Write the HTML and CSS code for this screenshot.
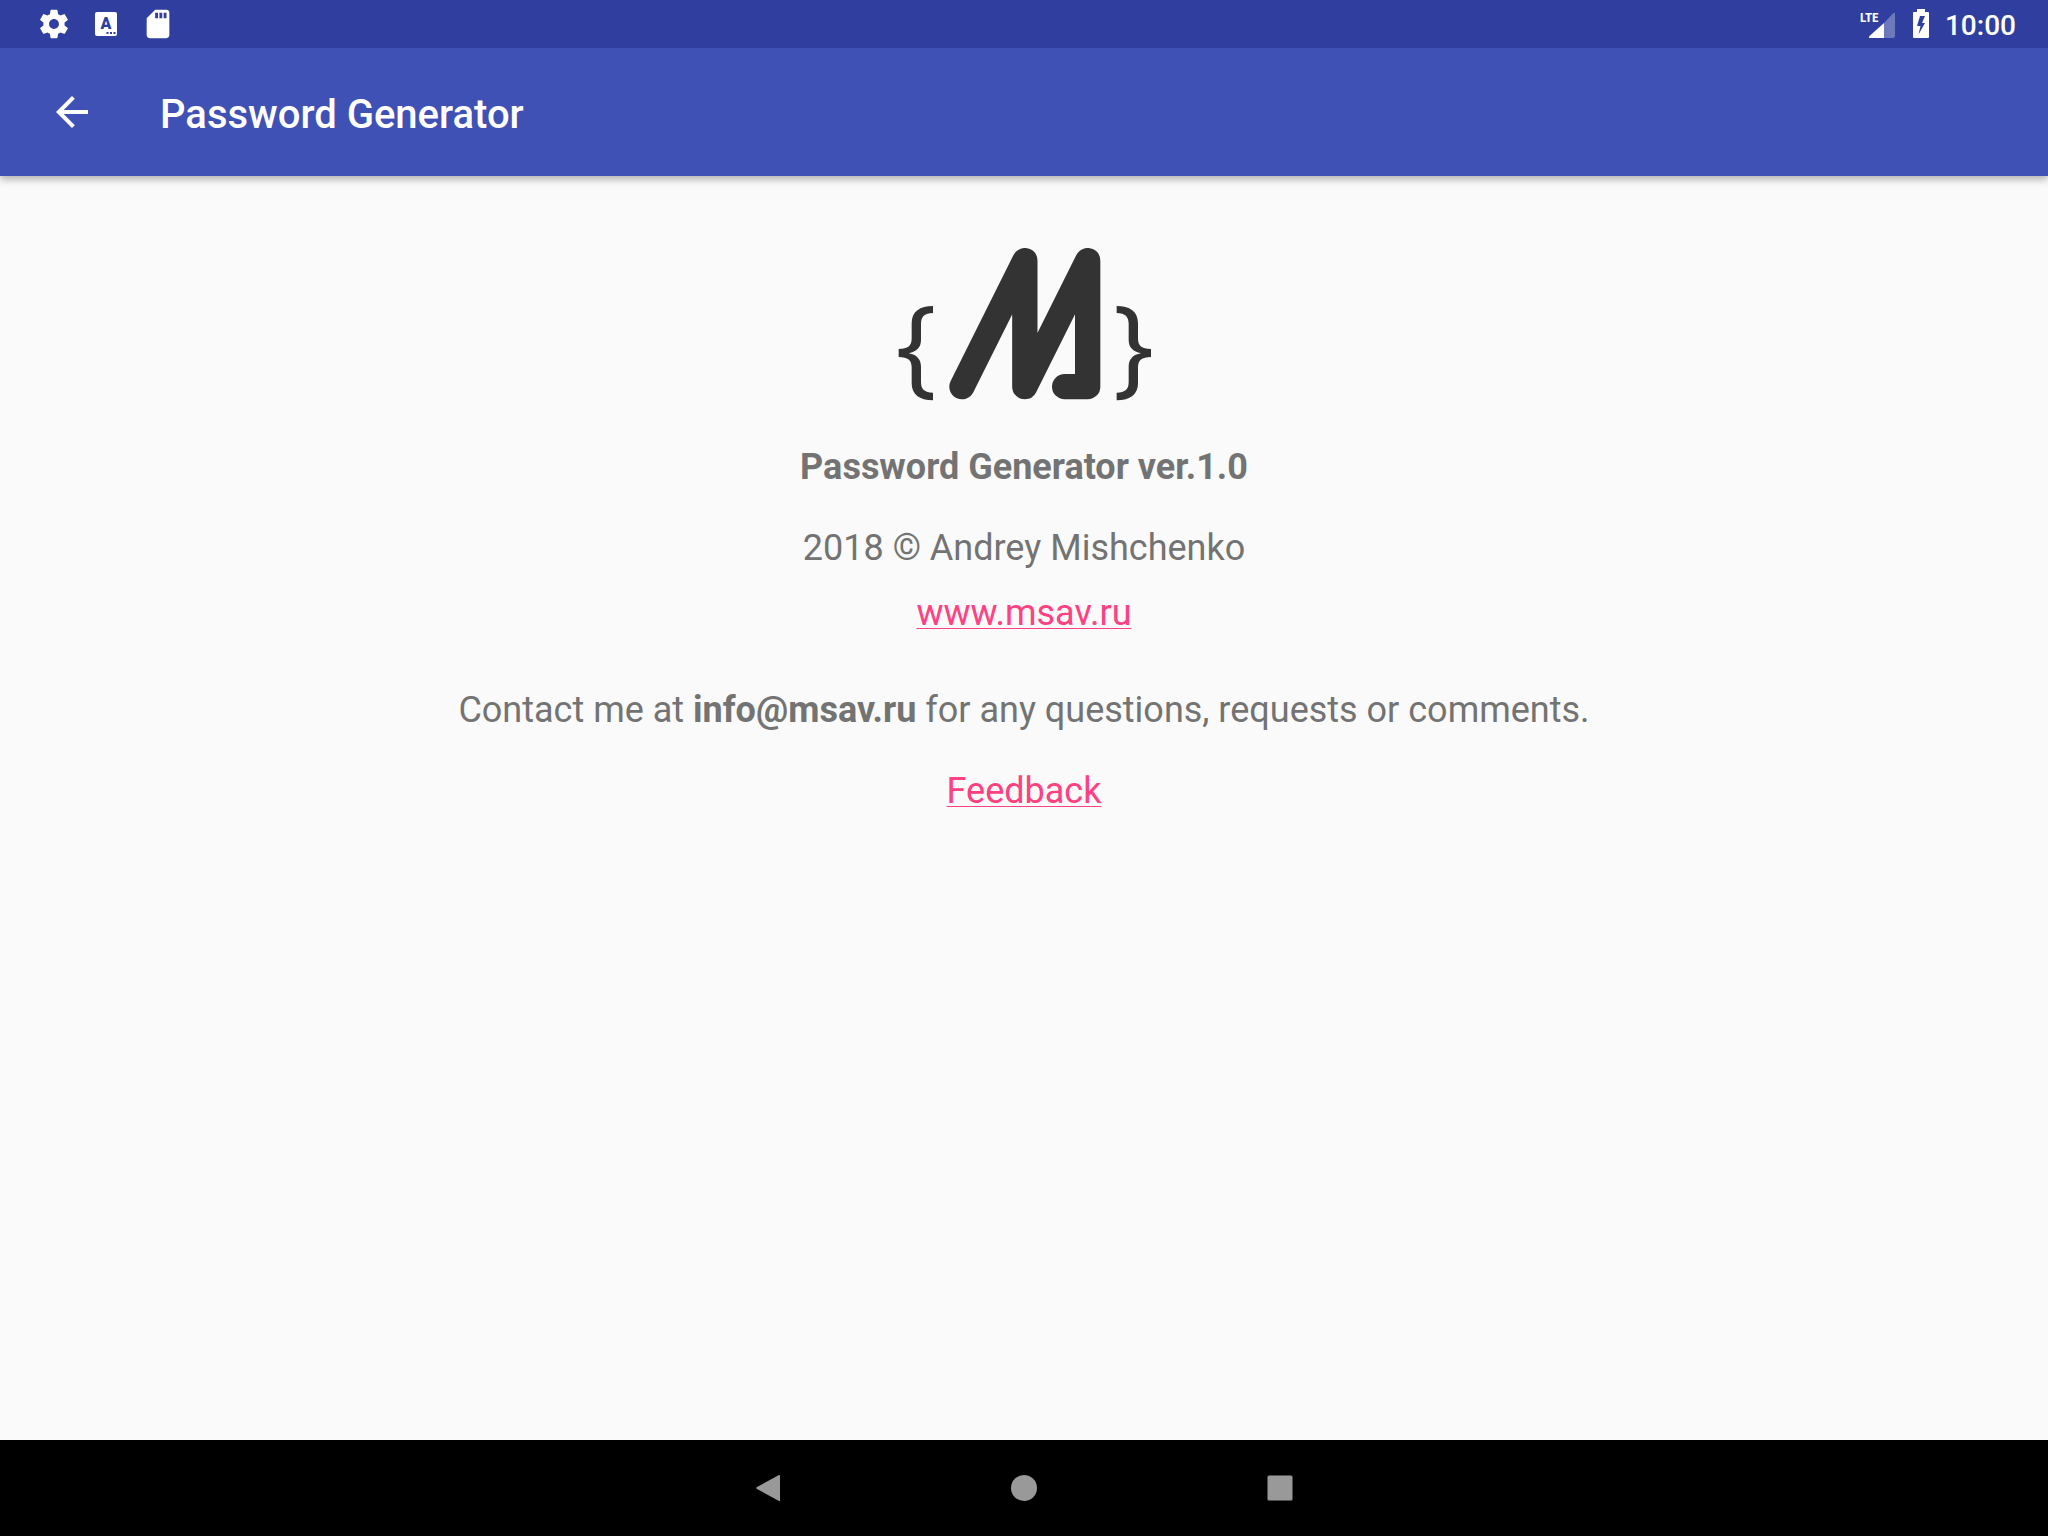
FILE: index.html
```html
<!DOCTYPE html>
<html lang="en">
<head>
<meta charset="utf-8">
<meta name="viewport" content="width=device-width, initial-scale=1">
<title>Password Generator</title>
<link rel="stylesheet" href="styles.css">
</head>
<body>
<div class="status-bar">
  <div class="status-left">
    <svg class="status-icon" viewBox="0 0 24 24" aria-hidden="true"><path d="M19.43 12.98c.04-.32.07-.64.07-.98s-.03-.66-.07-.98l2.11-1.65c.19-.15.24-.42.12-.64l-2-3.46c-.12-.22-.39-.3-.61-.22l-2.49 1c-.52-.4-1.08-.73-1.69-.98l-.38-2.65C14.46 2.18 14.25 2 14 2h-4c-.25 0-.46.18-.49.42l-.38 2.65c-.61.25-1.17.59-1.69.98l-2.49-1c-.23-.09-.49 0-.61.22l-2 3.46c-.13.22-.07.49.12.64l2.11 1.65c-.04.32-.07.65-.07.98s.03.66.07.98l-2.11 1.65c-.19.15-.24.42-.12.64l2 3.46c.12.22.39.3.61.22l2.49-1c.52.4 1.08.73 1.69.98l.38 2.65c.03.24.24.42.49.42h4c.25 0 .46-.18.49-.42l.38-2.65c.61-.25 1.17-.59 1.69-.98l2.49 1c.23.09.49 0 .61-.22l2-3.46c.12-.22.07-.49-.12-.64l-2.11-1.65zM12 15.5c-1.93 0-3.5-1.57-3.5-3.5s1.57-3.5 3.5-3.5 3.5 1.57 3.5 3.5-1.57 3.5-3.5 3.5z"/></svg>
    <svg class="status-icon" viewBox="0 0 34 34" aria-hidden="true">
      <rect x="6" y="5" width="22" height="24" rx="2"/>
      <text class="keyboard-letter" x="17" y="22" text-anchor="middle">A</text>
      <path class="keyboard-dots" d="M17.500 25h2v2h-2zM21 25h2v2h-2zM24.500 25h2v2h-2z"/>
    </svg>
    <svg class="status-icon" viewBox="0 0 24 24" aria-hidden="true"><path d="M18 2h-8L4.020 8 4 20c0 1.100.9 2 2 2h12c1.100 0 2-.9 2-2V4c0-1.100-.9-2-2-2zm-6 6h-2V4h2v4zm3 0h-2V4h2v4zm3 0h-2V4h2v4z"/></svg>
  </div>
  <div class="status-right">
    <svg class="signal-icon" viewBox="0 0 36 32" role="img" aria-label="LTE signal">
      <path class="signal-empty" d="M24 30V15L33 5.500Q35 4 35 6V28Q35 30 33 30Z"/>
      <path d="M24 15V30H10Q8 30 9.500 28Z"/>
      <text class="signal-label" x="0" y="14">LTE</text>
    </svg>
    <svg class="battery-icon" viewBox="0 0 16 30" role="img" aria-label="Battery charging"><path fill-rule="evenodd" d="M4 0h8v3h3q1 0 1 1v24q0 1-1 1H1q-1 0-1-1V4q0-1 1-1h3zM7 7 4 17h3.500L5.500 25.500 12 14H9L12 7z"/></svg>
    <time class="clock">10:00</time>
  </div>
</div>
<header class="app-bar">
  <button class="back-button" type="button" aria-label="Navigate up">
    <svg class="back-icon" viewBox="0 0 24 24" aria-hidden="true"><path d="M20 11H7.830l5.590-5.590L12 4l-8 8 8 8 1.410-1.410L7.830 13H20v-2z"/></svg>
  </button>
  <h1 class="app-title">Password Generator</h1>
</header>
<main class="about">
  <svg class="logo" viewBox="48 54 768 459" role="img" aria-label="M logo">
    <path class="logo-mark" d="M246 470 434.500 92V470L623 92V470H554"/>
    <path class="logo-brace" d="M159 228C120 228 95 244 95 280V325C95 348 84 357 56 357V381C84 381 95 391 95 412V460C95 493 118 511 159 511V488C133 487 123 478 123 456V410C123 388 110 374 86 370C110 365 123 352 123 330V282C123 260 133 250 159 249Z"/>
    <path class="logo-brace" d="M710 228C749 228 774 244 774 280V325C774 348 785 357 813 357V381C785 381 774 391 774 412V460C774 493 751 511 710 511V488C736 487 746 478 746 456V410C746 388 759 374 783 370C759 365 746 352 746 330V282C746 260 736 250 710 249Z"/>
  </svg>
  <p class="version"><strong>Password Generator ver.1.0</strong></p>
  <p class="copyright">2018 © Andrey Mishchenko</p>
  <p class="website"><a class="link" href="http://www.msav.ru">www.msav.ru</a></p>
  <p class="contact">Contact me at <strong>info@msav.ru</strong> for any questions, requests or comments.</p>
  <p class="feedback"><a class="link" href="mailto:info@msav.ru">Feedback</a></p>
</main>
<nav class="nav-bar" aria-label="System navigation">
  <button class="nav-button" type="button" aria-label="Back"><svg class="nav-icon" viewBox="0 0 28 28" aria-hidden="true"><path d="M25 1Q26 .5 26 2V26Q26 27.500 25 27L3 15Q1.500 14 3 13Z"/></svg></button>
  <button class="nav-button" type="button" aria-label="Home"><svg class="nav-icon" viewBox="0 0 28 28" aria-hidden="true"><circle cx="14" cy="14" r="13"/></svg></button>
  <button class="nav-button" type="button" aria-label="Recent apps"><svg class="nav-icon" viewBox="0 0 28 28" aria-hidden="true"><rect x="1.500" y="1.500" width="25" height="25" rx="1.500"/></svg></button>
</nav>
</body>
</html>
```
FILE: styles.css
```css
* {
  box-sizing: border-box;
}

body {
  margin: 0;
  min-height: 100vh;
  display: flex;
  flex-direction: column;
  background: #fafafa;
  color: #737373;
  font-family: Roboto, "Noto Sans", sans-serif;
  font-size: 36px;
  line-height: 41px;
}

button {
  display: flex;
  align-items: center;
  justify-content: center;
  padding: 0;
  border: 0;
  background: none;
  cursor: pointer;
}

svg {
  display: block;
}

/* Stacked above the app bar so its shadow only falls downwards. */
.status-bar {
  position: relative;
  z-index: 1;
  display: flex;
  align-items: center;
  justify-content: space-between;
  height: 48px;
  padding: 0 32px 0 37px;
  background: #303f9f;
  color: #fff;
}

.status-left {
  display: flex;
  gap: 18px;
}

.status-right {
  display: flex;
  align-items: center;
}

.status-icon {
  width: 34px;
  height: 34px;
  fill: #fff;
}

.keyboard-letter {
  fill: #303f9f;
  font-size: 16px;
  font-weight: 900;
}

.keyboard-dots {
  fill: #303f9f;
}

.signal-icon {
  width: 36px;
  height: 32px;
  margin-right: 17px;
  fill: #fff;
  overflow: visible;
}

.signal-empty {
  opacity: 0.3;
}

.signal-label {
  font-family: "Roboto Condensed", "Liberation Sans Narrow", Roboto, sans-serif;
  font-size: 13px;
  font-weight: 700;
}

.battery-icon {
  width: 16px;
  height: 30px;
  margin-right: 16px;
  fill: #fff;
}

.clock {
  padding-top: 3px;
  font-size: 28px;
  font-weight: 500;
  line-height: 32px;
}

.app-bar {
  display: flex;
  align-items: center;
  height: 128px;
  padding: 0 16px;
  background: #3f51b5;
  color: #fff;
  box-shadow: 0 3px 8px rgba(0, 0, 0, 0.32);
}

.back-button {
  width: 112px;
  height: 112px;
}

.back-icon {
  width: 48px;
  height: 48px;
  fill: #fff;
}

.app-title {
  margin: 0 0 0 32px;
  padding-top: 6px;
  font-size: 40px;
  font-weight: 500;
  line-height: 48px;
}

.about {
  flex: 1;
  display: flex;
  flex-direction: column;
  align-items: center;
  padding: 72px 32px;
  text-align: center;
}

.about p {
  margin: 0;
}

.logo {
  width: 256px;
  height: 153px;
}

.logo-mark {
  fill: none;
  stroke: #333;
  stroke-width: 76;
  stroke-linecap: round;
  stroke-linejoin: round;
}

.logo-brace {
  fill: #333;
}

.about .version {
  margin-top: 46px;
}

.about .copyright,
.about .feedback {
  margin-top: 40px;
}

.about .website {
  margin-top: 24px;
}

.about .contact {
  margin-top: 56px;
}

.link {
  color: #ff4081;
  text-decoration: underline;
  text-decoration-thickness: 1px;
  text-underline-offset: 3px;
  text-decoration-skip-ink: none;
}

.nav-bar {
  display: flex;
  justify-content: center;
  height: 96px;
  background: #000;
}

.nav-button {
  width: 256px;
}

.nav-icon {
  width: 28px;
  height: 28px;
  fill: #999;
}
```
